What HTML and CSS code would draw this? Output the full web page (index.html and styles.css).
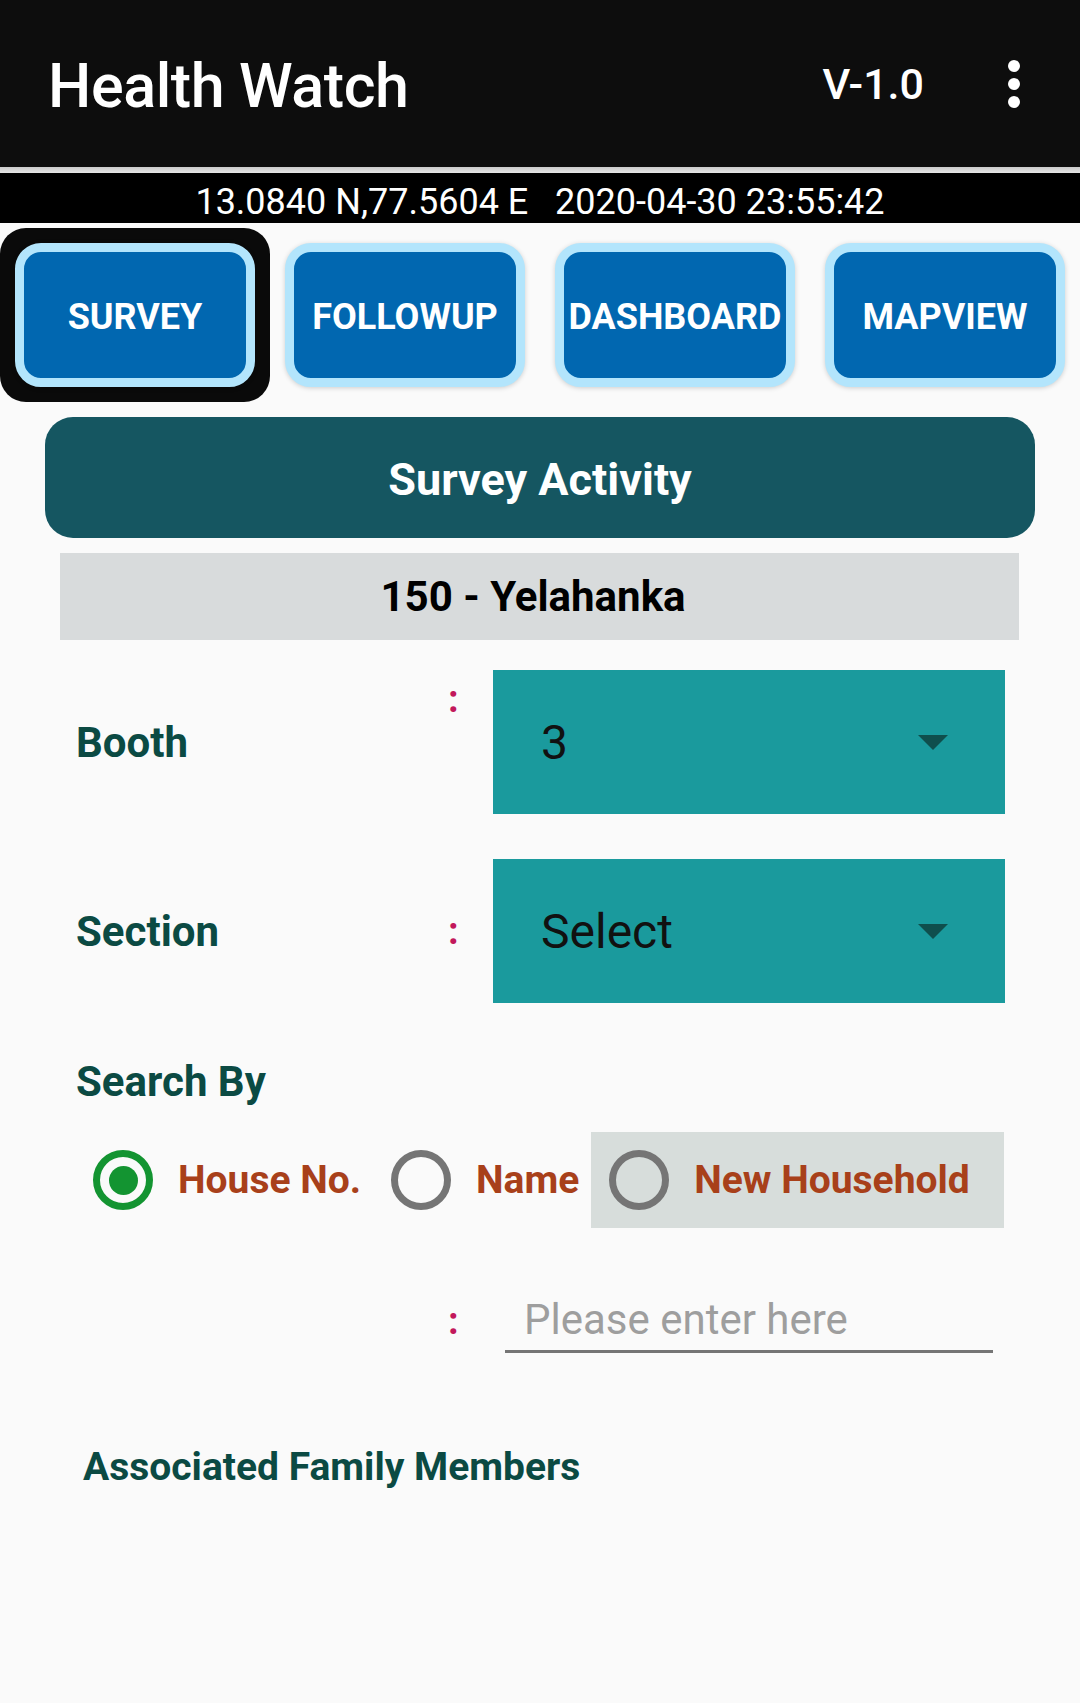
FILE: index.html
```html
<!DOCTYPE html>
<html lang="en">
<head>
    <meta charset="UTF-8">
    <meta name="viewport" content="width=device-width, initial-scale=1.0">
    <title>Health Watch</title>

    <link rel="stylesheet" href="styles.css">
</head>
<body>
    <div class="appbar">
        <span class="appTitle">Health Watch</span>
        <span class="version">V-1.0</span>
        <span class="kebab"><i></i><i></i><i></i></span>
    </div>
    <div class="shade"></div>
    <div class="geoBar">13.0840 N,77.5604 E&nbsp;&nbsp;&nbsp;2020-04-30 23:55:42</div>

    <!-- 상단 탭 버튼 -->
    <div class="tabs">
        <div class="tab active"><div class="tabBtn">SURVEY</div></div>
        <div class="tab"><div class="tabBtn">FOLLOWUP</div></div>
        <div class="tab"><div class="tabBtn">DASHBOARD</div></div>
        <div class="tab"><div class="tabBtn">MAPVIEW</div></div>
    </div>

    <div class="activityTitle">Survey Activity</div>
    <div class="district">150 - Yelahanka</div>

    <div class="formRow firstRow">
        <span class="label">Booth</span>
        <span class="colon colonTop">:</span>
        <div class="dropdown"><span>3</span><i class="arrow"></i></div>
    </div>
    <div class="formRow secondRow">
        <span class="label">Section</span>
        <span class="colon">:</span>
        <div class="dropdown"><span>Select</span><i class="arrow"></i></div>
    </div>

    <div class="searchTitle">Search By</div>
    <div class="radioGroup">
        <div class="radioItem"><span class="radio checked"></span>House No.</div>
        <div class="radioItem"><span class="radio"></span>Name</div>
        <div class="radioItem highlight"><span class="radio"></span>New Household</div>
    </div>

    <div class="formRow inputRow">
        <span class="label"></span>
        <span class="colon">:</span>
        <input class="searchInput" type="text" placeholder="Please enter here">
    </div>

    <div class="familyTitle">Associated Family Members</div>
</body>
</html>
```

FILE: styles.css
```css
body{margin: 0; background: #fafafa; font-family: Roboto, "Noto Sans", sans-serif; width: 1080px; min-height: 1703px;}

.appbar{height: 167px; background: #0d0d0d; display: flex; align-items: center; color: #fff;}
.appTitle{flex: 1; padding-left: 48px; padding-top: 4px; font-size: 61px; font-weight: 500; letter-spacing: -0.4px;}
.version{font-size: 43px; font-weight: 500; margin-right: 84px;}
.kebab{display: flex; flex-direction: column; gap: 6px; margin-right: 60px;}
.kebab i{width: 12px; height: 12px; border-radius: 50%; background: #fff;}
.shade{height: 6px; background: linear-gradient(#c9c9c9, #e6e6e6);}
.geoBar{height: 50px; box-sizing: border-box; padding-top: 4px; background: #000; color: #fff; font-size: 36px; line-height: 50px; text-align: center;}

.tabs{display: grid; grid-template-columns: repeat(4, 270px); margin-top: 5px;}
.tab{height: 174px; padding: 15px; box-sizing: border-box; border-radius: 26px;}
.tab.active{background: #0a0a0a;}
.tabBtn{height: 100%; box-sizing: border-box; padding-top: 4px; border: 9px solid #b3e5fc; border-radius: 26px; background: #0167b0; color: #fff; font-size: 36px; font-weight: 700; display: flex; align-items: center; justify-content: center; white-space: nowrap; box-shadow: 0 1px 5px rgba(0,0,0,0.18);}

.activityTitle{margin: 15px 45px 0; height: 121px; padding-top: 4px; box-sizing: border-box; border-radius: 28px; background: #155661; color: #fff; font-size: 45px; font-weight: 700; display: flex; align-items: center; justify-content: center;}
.district{margin: 15px 61px 0 60px; height: 87px; padding-right: 13px; background: #d8dbdc; color: #000; font-size: 42px; font-weight: 700; display: flex; align-items: center; justify-content: center;}

.formRow{display: grid; grid-template-columns: 372px 45px 512px; padding-left: 76px; align-items: center;}
.firstRow{margin-top: 30px; height: 144px;}
.secondRow{margin-top: 45px; height: 144px;}
.label{font-size: 42px; font-weight: 700; color: #0b4a43;}
.colon{font-size: 38px; font-weight: 700; color: #c2185b;}
.colonTop{align-self: start; margin-top: 7px;}
.dropdown{height: 144px; background: #1a9a9d; display: flex; align-items: center; justify-content: space-between; padding: 0 57px 0 48px; font-size: 48px; color: #111;}
.arrow{width: 0; height: 0; border-left: 15px solid transparent; border-right: 15px solid transparent; border-top: 15px solid #0f4f4d;}

.searchTitle{margin-top: 54px; padding-left: 76px; font-size: 42px; font-weight: 700; color: #0b4a43;}
.radioGroup{display: flex; margin-top: 26px; padding-left: 93px; height: 96px;}
.radioItem{display: flex; align-items: center; gap: 25px; margin-right: 30px; font-size: 39px; font-weight: 700; color: #a8401a;}
.radioItem:nth-child(2){margin-right: 12px;}
.radioItem.highlight{background: #d7dddb; padding-left: 18px; width: 413px; box-sizing: border-box; margin-right: 0;}
.radio{width: 60px; height: 60px; box-sizing: border-box; border: 7px solid #757575; border-radius: 50%; display: flex; align-items: center; justify-content: center;}
.radio.checked{border-color: #139431;}
.radio.checked::after{content: ""; width: 29px; height: 29px; border-radius: 50%; background: #139431;}

.inputRow{margin-top: 60px;}
.searchInput{margin-left: 12px; width: 488px; height: 65px; box-sizing: border-box; border: none; border-bottom: 3px solid #757575; background: transparent; padding: 0 0 0 19px; font-family: Roboto, sans-serif; font-size: 42px; color: #222; outline: none;}
.searchInput::placeholder{color: #9e9e9e;}

.familyTitle{margin-top: 91px; padding-left: 83px; font-size: 39px; font-weight: 700; color: #0b4a43;}
```
